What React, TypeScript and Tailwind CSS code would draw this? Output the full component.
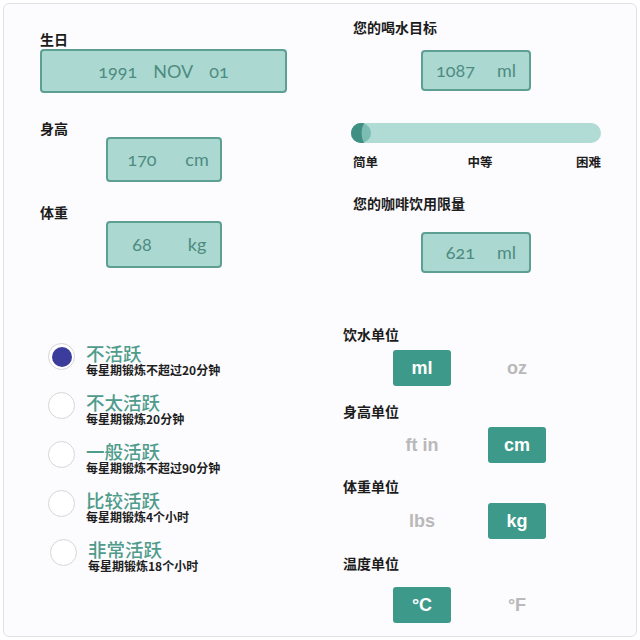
const cjk = "font-['Noto_Sans_CJK_SC',sans-serif]";
const latin = "font-['Lato','Noto_Sans_CJK_SC',sans-serif] [font-variant-numeric:oldstyle-nums]";

function Label({ children, className = "" }: { children: string; className?: string }) {
  return <div className={`${cjk} text-[14px] leading-4 font-bold text-[#1c1c1c] ${className}`}>{children}</div>;
}

function SmallBox({ value, unit, className = "" }: { value: string; unit: string; className?: string }) {
  return (
    <div className={`flex h-[45px] w-[116px] items-center rounded-[4px] border-2 border-[#5e9f94] bg-[#abd8d0] ${latin} text-[18px] text-[#4e8b81] ${className}`}>
      <span className="ml-[4px] w-[60px] text-center">{value}</span>
      <span className="ml-[5px] w-[40px] text-center">{unit}</span>
    </div>
  );
}

function GoalBox({ value, className = "" }: { value: string; className?: string }) {
  return (
    <div className={`mx-auto flex h-[41px] w-[110px] items-center rounded-[4px] border-2 border-[#5e9f94] bg-[#abd8d0] ${latin} text-[18px] text-[#4e8b81] ${className}`}>
      <span className="w-[52px] text-right">{value}</span>
      <span className="ml-[22px]">ml</span>
    </div>
  );
}

function Radio({ title, sub, checked = false, className = "" }: { title: string; sub: string; checked?: boolean; className?: string }) {
  return (
    <div className={`flex items-start ${className}`}>
      <div className="flex h-[27px] w-[27px] shrink-0 items-center justify-center rounded-full border-[1.5px] border-[#d6d6d6] bg-white">
        {checked && <div className="h-[20px] w-[20px] rounded-full bg-[#3c3c9c]" />}
      </div>
      <div className={`ml-[11px] ${cjk}`}>
        <div className="text-[18.5px] leading-5 font-medium text-[#4f9c8b]">{title}</div>
        <div className="text-[12px] leading-[14px] font-bold text-[#1e1e1e]">{sub}</div>
      </div>
    </div>
  );
}

function UnitRow({ a, b, active, className = "" }: { a: string; b: string; active: 0 | 1; className?: string }) {
  const cell = (t: string, on: boolean) => (
    <div
      className={`flex h-[36px] w-[58px] items-center justify-center rounded-[3px] font-['Liberation_Sans',sans-serif] text-[18px] font-bold ${
        on ? "bg-[#3d9a8a] text-white" : "text-[#b9b9b9]"
      }`}
    >
      {t}
    </div>
  );
  return (
    <div className={`ml-[50px] flex gap-[37px] ${className}`}>
      {cell(a, active === 0)}
      {cell(b, active === 1)}
    </div>
  );
}

export default function App() {
  return (
    <div className="h-[640px] w-[640px] bg-white">
      <div className="m-[3px] flex h-[634px] w-[634px] rounded-md border border-[#e2e2e4] bg-[#fcfbfd]">
        <div className="flex w-[339px] flex-col pl-[36px] pt-[27px]">
          <Label>生日</Label>
          <div className={`mt-[2px] flex h-[44px] w-[247px] items-center justify-center gap-[16px] rounded-[4px] border-2 border-[#5e9f94] bg-[#abd8d0] ${latin} text-[18px] text-[#4e8b81]`}>
            <span>1991</span>
            <span>NOV</span>
            <span>01</span>
          </div>
          <Label className="mt-[27px]">身高</Label>
          <SmallBox value="170" unit="cm" className="ml-[66px] mt-[1px]" />
          <Label className="mt-[22px]">体重</Label>
          <SmallBox value="68" unit="kg" className="ml-[66px] mt-[1px] h-[47px]" />
          <div className="ml-[8px] mt-[75px] flex flex-col gap-[15px]">
            <Radio checked title="不活跃" sub="每星期锻炼不超过20分钟" />
            <Radio title="不太活跃" sub="每星期锻炼20分钟" />
            <Radio title="一般活跃" sub="每星期锻炼不超过90分钟" />
            <Radio title="比较活跃" sub="每星期锻炼4个小时" />
            <Radio title="非常活跃" sub="每星期锻炼18个小时" className="ml-[2px]" />
          </div>
        </div>

        <div className="flex flex-1 flex-col">
          <div className="ml-[8px] w-[250px] pt-[15px]">
            <Label className="ml-[2px]">您的喝水目标</Label>
            <GoalBox value="1087" className="mt-[15px]" />
            <div className="relative mt-[32px] h-[20px] w-[250px] rounded-full bg-[#b0dcd5]">
              <svg className="absolute left-0 top-0" width="20" height="20" viewBox="0 0 20 20">
                <circle cx="10" cy="10" r="10" fill="#7cbcb2" />
                <path d="M10 0 A10 10 0 0 0 10 20 L13 20 Q8 10 13 0 Z" fill="#3f9083" />
              </svg>
            </div>
            <div className={`mt-[11px] flex justify-between ${cjk} text-[12.5px] leading-[15px] font-bold text-[#1c1c1c]`}>
              <span className="ml-[2px]">简单</span>
              <span className="ml-[6px]">中等</span>
              <span>困难</span>
            </div>
            <Label className="ml-[2px] mt-[26px]">您的咖啡饮用限量</Label>
            <GoalBox value="621" className="mt-[21px]" />
          </div>

          <Label className="mt-[53px]">饮水单位</Label>
          <UnitRow a="ml" b="oz" active={0} className="mt-[8px]" />
          <Label className="mt-[17px]">身高单位</Label>
          <UnitRow a="ft in" b="cm" active={1} className="mt-[8px]" />
          <Label className="mt-[15px]">体重单位</Label>
          <UnitRow a="lbs" b="kg" active={1} className="mt-[9px]" />
          <Label className="mt-[16px]">温度单位</Label>
          <UnitRow a="°C" b="°F" active={0} className="mt-[16px]" />
        </div>
      </div>
    </div>
  );
}
